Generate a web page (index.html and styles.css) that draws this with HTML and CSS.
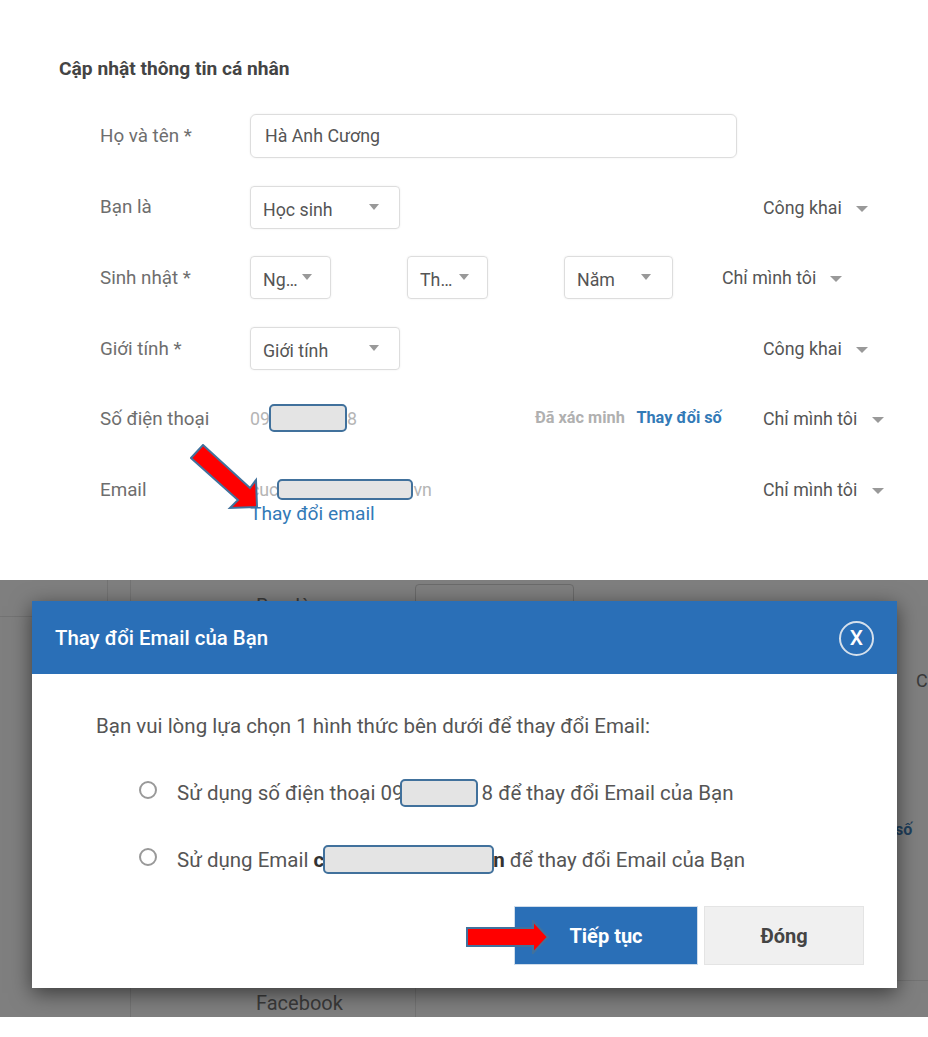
FILE: index.html
```html
<!DOCTYPE html>
<html lang="vi">
<head>
    <meta charset="UTF-8">
    <meta name="viewport" content="width=device-width, initial-scale=1.0">
    <title>Thay đổi Email của Bạn</title>
    <link rel="stylesheet" href="styles.css">
</head>
<body>
    <!-- Profile form -->
    <section class="profile">
        <h2 class="profile-title">Cập nhật thông tin cá nhân</h2>

        <div class="row row-name">
            <label class="row-label">Họ và tên *</label>
            <div class="text-input">Hà Anh Cương</div>
        </div>

        <div class="row row-role">
            <label class="row-label">Bạn là</label>
            <div class="select select-wide">Học sinh<span class="caret"></span></div>
            <div class="privacy">Công khai<span class="caret caret-large"></span></div>
        </div>

        <div class="row">
            <label class="row-label">Sinh nhật *</label>
            <div class="select select-small">Ng…<span class="caret"></span></div>
            <div class="select select-small">Th…<span class="caret"></span></div>
            <div class="select select-year">Năm<span class="caret"></span></div>
            <div class="privacy privacy-birthday">Chỉ mình tôi<span class="caret caret-large"></span></div>
        </div>

        <div class="row">
            <label class="row-label">Giới tính *</label>
            <div class="select select-wide">Giới tính<span class="caret"></span></div>
            <div class="privacy">Công khai<span class="caret caret-large"></span></div>
        </div>

        <div class="row row-text">
            <label class="row-label">Số điện thoại</label>
            <div class="muted">09<span class="redact redact-phone"></span>8</div>
            <div class="phone-actions">
                <span class="verified">Đã xác minh</span>
                <a class="change-phone">Thay đổi số</a>
            </div>
            <div class="privacy privacy-far">Chỉ mình tôi<span class="caret caret-large"></span></div>
        </div>

        <div class="row row-text">
            <label class="row-label">Email</label>
            <div class="email-cell">
                <div class="muted">cuc<span class="redact redact-email"></span>vn</div>
                <a class="change-email">Thay đổi email</a>
            </div>
            <div class="privacy privacy-far">Chỉ mình tôi<span class="caret caret-large"></span></div>
        </div>

        <svg class="arrow arrow-diagonal" width="70" height="66" viewBox="0 0 70 66">
            <polygon points="13,1 60,44 66,36 67,63 40,64 48,56 1,14" fill="#ff0000" stroke="#41719c" stroke-width="2"/>
        </svg>
    </section>

    <!-- Dialog on dimmed page -->
    <section class="backdrop">
        <div class="ghost ghost-line-a"></div>
        <div class="ghost ghost-line-b"></div>
        <div class="ghost ghost-line-c"></div>
        <div class="ghost ghost-line-d"></div>
        <div class="ghost ghost-line-e"></div>
        <div class="ghost ghost-select"></div>
        <div class="ghost ghost-text ghost-ban">Bạn là</div>
        <div class="ghost ghost-text ghost-facebook">Facebook</div>
        <div class="ghost ghost-text ghost-c">C</div>
        <div class="ghost ghost-text ghost-so">số</div>

        <div class="dialog">
            <div class="dialog-header">
                <h3 class="dialog-title">Thay đổi Email của Bạn</h3>
                <span class="dialog-close">X</span>
            </div>
            <div class="dialog-body">
                <p class="dialog-lead">Bạn vui lòng lựa chọn 1 hình thức bên dưới để thay đổi Email:</p>
                <div class="option">
                    <span class="radio"></span>
                    <span>Sử dụng số điện thoại 09<span class="redact redact-dialog-phone"></span>8 để thay đổi Email của Bạn</span>
                </div>
                <div class="option">
                    <span class="radio"></span>
                    <span>Sử dụng Email <b>c</b><span class="redact redact-dialog-email"></span><b>n</b> để thay đổi Email của Bạn</span>
                </div>
                <div class="dialog-actions">
                    <button class="btn btn-primary">Tiếp tục</button>
                    <button class="btn btn-default">Đóng</button>
                </div>
            </div>
            <svg class="arrow arrow-right" width="84" height="34" viewBox="0 0 84 34">
                <polygon points="1,8 67,8 67,1 82,17 67,33 67,26 1,26" fill="#ff0000" stroke="#41719c" stroke-width="2"/>
            </svg>
        </div>
    </section>
</body>
</html>
```

FILE: styles.css
```css
* {
    box-sizing: border-box;
}
body {
    font-family: Roboto, "Liberation Sans", sans-serif;
    font-size: 17.8px;
    margin: 0;
    height: 1037px;
    background: #fff;
    color: #555;
    overflow: hidden;
}
.profile {
    position: relative;
    height: 580px;
    padding: 58px 43px 0 100px;
}
.profile-title {
    font-size: 19.2px;
    line-height: 22px;
    font-weight: 700;
    color: #444;
    margin: 0 0 34px -41px;
}
.row {
    display: flex;
    align-items: center;
    height: 43px;
    margin-bottom: 28px;
}
.row-name {
    margin-bottom: 29px;
}
.row-role {
    margin-bottom: 27px;
}
.row-role .row-label {
    margin-bottom: 2px;
}
.row-text {
    align-items: flex-start;
    padding-top: 10px;
}
.row-label {
    width: 150px;
    flex: none;
    font-size: 18.8px;
    color: #6e6e6e;
}
.text-input {
    width: 487px;
    height: 44px;
    line-height: 42px;
    padding: 0 14px;
    border: 1px solid #ddd;
    border-radius: 6px;
    box-shadow: 0 0 2px rgba(0,0,0,0.08);
}
.select {
    display: flex;
    align-items: center;
    justify-content: space-between;
    height: 43px;
    padding: 3px 20px 0 12px;
    border: 1px solid #ddd;
    border-radius: 4px;
    box-shadow: 0 0 2px rgba(0,0,0,0.08);
}
.select-wide {
    width: 150px;
}
.select-small {
    width: 81px;
    margin-right: 76px;
    padding-right: 18px;
}
.select-year {
    width: 109px;
    padding-right: 21px;
}
.caret {
    display: inline-block;
    width: 0;
    height: 0;
    border-left: 5.5px solid transparent;
    border-right: 5.5px solid transparent;
    border-top: 6px solid #999;
    position: relative;
    top: -2px;
}
.caret-large {
    border-left-width: 6px;
    border-right-width: 6px;
    top: 1px;
}
.privacy {
    display: flex;
    align-items: center;
    justify-content: space-between;
    width: 105px;
    margin-left: auto;
    margin-right: 17px;
    color: #555;
}
.privacy-birthday {
    width: 120px;
    margin-left: 49px;
    margin-right: 0;
}
.privacy-far {
    width: 121px;
    margin-left: auto;
    margin-right: 1px;
}
.muted {
    color: #b5b5b5;
    white-space: nowrap;
}
.phone-actions {
    position: absolute;
    left: 535px;
    font-size: 16.3px;
    font-weight: 700;
    white-space: nowrap;
}
.verified {
    color: #b0b0b0;
    margin-right: 8px;
}
.change-phone {
    color: #337ab7;
}
.email-cell {
    display: flex;
    flex-direction: column;
    gap: 2px;
}
.change-email {
    font-size: 19.2px;
    color: #337ab7;
}
.redact {
    display: inline-block;
    vertical-align: middle;
    background: #e4e4e4;
    border: 2px solid #41719c;
    border-radius: 5px;
}
.redact-phone {
    width: 78px;
    height: 28px;
    margin: -4px 0 0 -1px;
}
.redact-email {
    width: 136px;
    height: 21px;
    margin: -3px 0 0 -1px;
}
.arrow {
    position: absolute;
}
.arrow-diagonal {
    left: 190px;
    top: 444px;
}
.arrow-right {
    left: 434px;
    top: 319px;
}

/* dimmed part */
.backdrop {
    position: relative;
    height: 437px;
    padding: 21px 30px 0 32px;
    background: #7f7f7f;
    overflow: hidden;
}
.ghost {
    position: absolute;
}
.ghost-text {
    color: #3a3a3a;
    font-size: 20px;
}
.ghost-line-a, .ghost-line-b, .ghost-line-e {
    top: 0;
    bottom: 0;
    width: 1px;
    background: #737373;
}
.ghost-line-a { left: 107px; bottom: auto; height: 36px; }
.ghost-line-b { left: 130px; }
.ghost-line-e { left: 415px; top: 40px; }
.ghost-line-c, .ghost-line-d {
    height: 1px;
    background: #737373;
}
.ghost-line-c { left: 0; width: 130px; top: 36px; }
.ghost-line-d { left: 897px; right: 0; top: 400px; }
.ghost-select {
    left: 415px;
    top: 4px;
    width: 159px;
    height: 40px;
    border: 1px solid #6a6a6a;
    border-radius: 4px;
}
.ghost-ban { left: 256px; top: 14px; }
.ghost-facebook { left: 256px; top: 411px; }
.ghost-c { left: 916px; top: 90px; font-size: 18px; }
.ghost-so { left: 895px; top: 240px; color: #1f3f5c; font-size: 16px; font-weight: 700; }
.dialog {
    position: relative;
    width: 865px;
    height: 387px;
    background: #fff;
    box-shadow: 0 5px 20px rgba(0,0,0,0.55);
}
.dialog-header {
    display: flex;
    align-items: center;
    justify-content: space-between;
    height: 73px;
    padding: 0 23px 0 23px;
    background: #2a6fb7;
}
.dialog-title {
    margin: 0;
    font-size: 20.4px;
    font-weight: 500;
    color: #fff;
}
.dialog-close {
    width: 35px;
    height: 35px;
    margin-top: 2px;
    line-height: 31px;
    text-align: center;
    border: 2px solid #d5e0ec;
    border-radius: 50%;
    color: #fff;
    font-size: 21px;
    font-weight: 500;
}
.dialog-body {
    padding: 38px 33px 0 64px;
}
.dialog-lead {
    margin: 0 0 36px;
    line-height: 28px;
    font-size: 20.5px;
}
.option {
    display: flex;
    gap: 20px;
    height: 34px;
    line-height: 34px;
    margin: 0 0 33px 43px;
    font-size: 20.5px;
    white-space: nowrap;
}
.option b {
    color: #333;
}
.radio {
    flex: none;
    width: 18px;
    height: 18px;
    margin-top: 5px;
    border: 2px solid #999;
    border-radius: 50%;
    background: #fff;
}
.redact-dialog-phone {
    width: 78px;
    height: 28px;
    margin: -4px 4px 0 -4px;
}
.redact-dialog-email {
    width: 171px;
    height: 29px;
    margin: -4px -1px 0 -1px;
}
.dialog-actions {
    display: flex;
    justify-content: flex-end;
    align-items: center;
    gap: 6px;
    margin-top: -4px;
}
.btn {
    font-family: inherit;
    font-size: 20px;
    font-weight: 700;
    height: 59px;
    border: 1px solid #e4e4e4;
}
.btn-primary {
    width: 184px;
    background: #2a6fb7;
    color: #fff;
    border-color: #cfdcea;
}
.btn-default {
    width: 160px;
    background: #f0f0f0;
    color: #444;
}
```
